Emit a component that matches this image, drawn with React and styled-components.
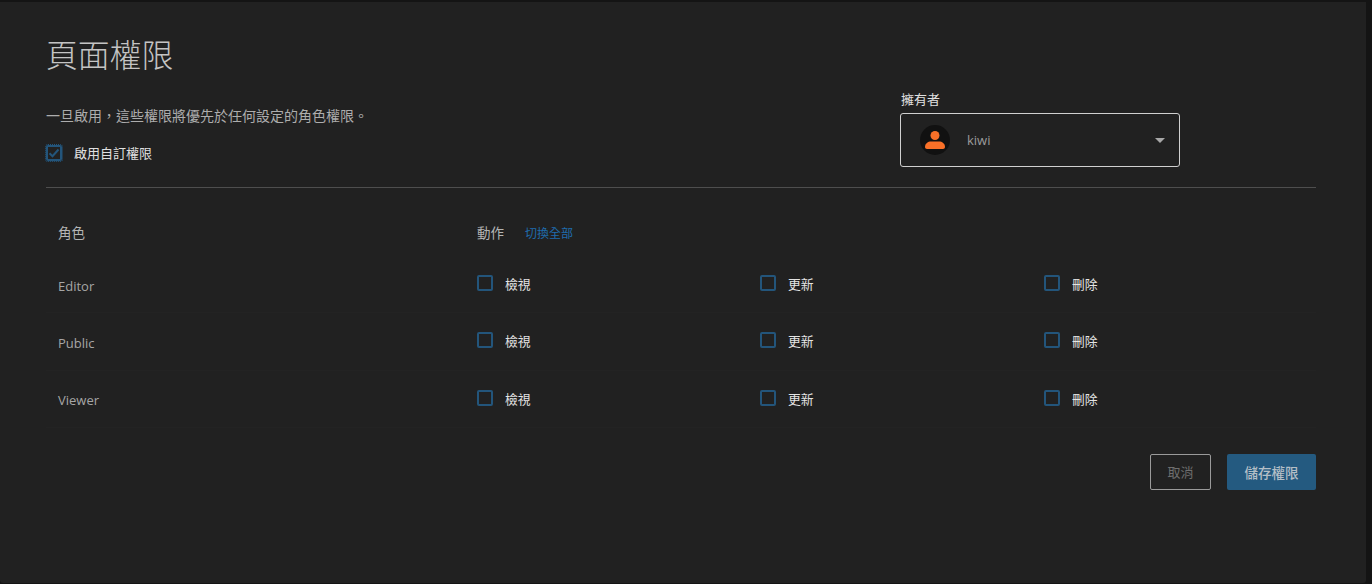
import React from "react";
import styled, { createGlobalStyle } from "styled-components";

const GlobalStyle = createGlobalStyle`
  html, body {
    margin: 0;
    padding: 0;
    background: #141414;
  }
  body {
    font-family: "Open Sans", "Noto Sans CJK TC", sans-serif;
  }
`;

const roles = ["Editor", "Public", "Viewer"];
const actions = ["檢視", "更新", "刪除"];

const UserIcon = () => (
  <svg width="20" height="20" viewBox="0 0 20 20" fill="#f97028">
    <circle cx="10" cy="5.5" r="4.5" />
    <path d="M0 17c0-3.6 3-5.5 6-5.5h8c3 0 6 1.900 6 5.500 0 1.300-.9 2-2 2H2c-1.100 0-2-.7-2-2z" />
  </svg>
);

const CheckMark = () => (
  <svg width="12" height="12" viewBox="0 0 12 12" fill="none" stroke="#23557b" strokeWidth="2">
    <path d="M1.500 6.200 4.500 9.200 10.500 2.500" />
  </svg>
);

const App = () => {
  return (
    <>
      <GlobalStyle />
      <Panel>
        <Title>頁面權限</Title>
        <Header>
          <Intro>
            <Description>一旦啟用，這些權限將優先於任何設定的角色權限。</Description>
            <CheckRow>
              <CheckBox $focused>
                <CheckMark />
              </CheckBox>
              <CheckLabel>啟用自訂權限</CheckLabel>
            </CheckRow>
          </Intro>
          <Owner>
            <OwnerLabel>擁有者</OwnerLabel>
            <OwnerSelect>
              <Avatar>
                <UserIcon />
              </Avatar>
              <OwnerName>kiwi</OwnerName>
              <Caret />
            </OwnerSelect>
          </Owner>
        </Header>
        <Divider />
        <HeadRow>
          <HeadCell>角色</HeadCell>
          <ActionHead>
            <HeadText>動作</HeadText>
            <ToggleAll>切換全部</ToggleAll>
          </ActionHead>
        </HeadRow>
        {roles.map((role) => (
          <RoleRow key={role}>
            <RoleName>{role}</RoleName>
            {actions.map((action) => (
              <ActionCell key={action}>
                <CheckBox />
                <ActionLabel>{action}</ActionLabel>
              </ActionCell>
            ))}
          </RoleRow>
        ))}
        <Footer>
          <CancelButton>取消</CancelButton>
          <SaveButton>儲存權限</SaveButton>
        </Footer>
      </Panel>
    </>
  );
};

const Panel = styled.div`
  box-sizing: border-box;
  width: 1366px;
  height: 581px;
  margin-top: 2px;
  padding: 0 50px 0 46px;
  background: #212121;
  border-radius: 0 0 3px 3px;
`;

const Title = styled.h1`
  margin: 0;
  padding-top: 32px;
  height: 76px;
  box-sizing: border-box;
  font-size: 31.800px;
  line-height: 42px;
  font-weight: 300;
  color: #c4c4c4;
`;

const Header = styled.div`
  display: flex;
  justify-content: space-between;
  height: 109px;
`;

const Intro = styled.div`
  display: flex;
  flex-direction: column;
  padding-top: 28px;
`;

const Description = styled.p`
  margin: 0;
  font-size: 14px;
  line-height: 20px;
  color: #adadad;
`;

const CheckRow = styled.div`
  display: flex;
  align-items: center;
  gap: 12px;
  margin-top: 17px;
`;

const CheckBox = styled.span`
  box-sizing: border-box;
  display: inline-flex;
  align-items: center;
  justify-content: center;
  flex: none;
  width: 16px;
  height: 16px;
  border: 2px solid #23557b;
  border-radius: 2px;
  outline: ${(p) => (p.$focused ? "1px dotted #23557b" : "none")};
`;

const CheckLabel = styled.span`
  font-size: 13px;
  line-height: 20px;
  color: #e0e0e0;
`;

const Owner = styled.div`
  width: 280px;
  margin-right: 136px;
  padding-top: 13px;
`;

const OwnerLabel = styled.div`
  font-size: 13px;
  line-height: 17px;
  padding-left: 1px;
  color: #e0e0e0;
  margin-bottom: 5px;
`;

const OwnerSelect = styled.div`
  box-sizing: border-box;
  display: flex;
  align-items: center;
  height: 54px;
  padding: 0 14px 0 19px;
  border: 1px solid #d0d0d0;
  border-radius: 3px;
`;

const Avatar = styled.span`
  display: flex;
  align-items: center;
  justify-content: center;
  width: 30px;
  height: 30px;
  border-radius: 50%;
  background: #111;
`;

const OwnerName = styled.span`
  flex: 1;
  margin-left: 17px;
  font-size: 13px;
  color: #9b9b9b;
`;

const Caret = styled.span`
  width: 0;
  height: 0;
  border-left: 5px solid transparent;
  border-right: 5px solid transparent;
  border-top: 5px solid #a8a8a8;
`;

const Divider = styled.hr`
  margin: 0;
  border: 0;
  border-top: 1px solid #4e4e4e;
`;

const HeadRow = styled.div`
  display: flex;
  align-items: center;
  height: 68px;
  padding-top: 21px;
  box-sizing: border-box;
`;

const HeadCell = styled.div`
  width: 431px;
  padding: 0 0 2px 12px;
  box-sizing: border-box;
  font-size: 13.500px;
  color: #b4b4b4;
`;

const ActionHead = styled.div`
  display: flex;
  gap: 21px;
  align-items: center;
`;

const HeadText = styled.span`
  padding-bottom: 2px;
  font-size: 13.500px;
  color: #b4b4b4;
`;

const ToggleAll = styled.a`
  font-size: 12px;
  color: #1f6cae;
`;

const RoleRow = styled.div`
  display: grid;
  grid-template-columns: 431px 283px 284px 1fr;
  align-items: center;
  height: 57.300px;
  padding-bottom: 2px;
  box-sizing: border-box;
  border-bottom: 1px solid #232323;
`;

const RoleName = styled.div`
  padding-left: 12px;
  padding-top: 5px;
  font-size: 13px;
  color: #a6a6a6;
`;

const ActionCell = styled.label`
  display: flex;
  align-items: center;
  gap: 12px;
`;

const ActionLabel = styled.span`
  padding-top: 1px;
  font-size: 12.800px;
  color: #e4e4e4;
`;

const Footer = styled.div`
  display: flex;
  justify-content: flex-end;
  gap: 16px;
  margin-top: 26px;
`;

const CancelButton = styled.button`
  box-sizing: border-box;
  width: 61px;
  height: 36px;
  padding: 0;
  background: transparent;
  border: 1px solid #9a9a9a;
  border-radius: 2px;
  font-family: inherit;
  font-size: 13px;
  color: #6e6e6e;
`;

const SaveButton = styled.button`
  box-sizing: border-box;
  width: 89px;
  height: 36px;
  padding: 0;
  background: #245a80;
  border: 0;
  border-radius: 2px;
  font-family: inherit;
  font-size: 13.500px;
  font-weight: 500;
  color: #b4bfc7;
`;

export default App;
